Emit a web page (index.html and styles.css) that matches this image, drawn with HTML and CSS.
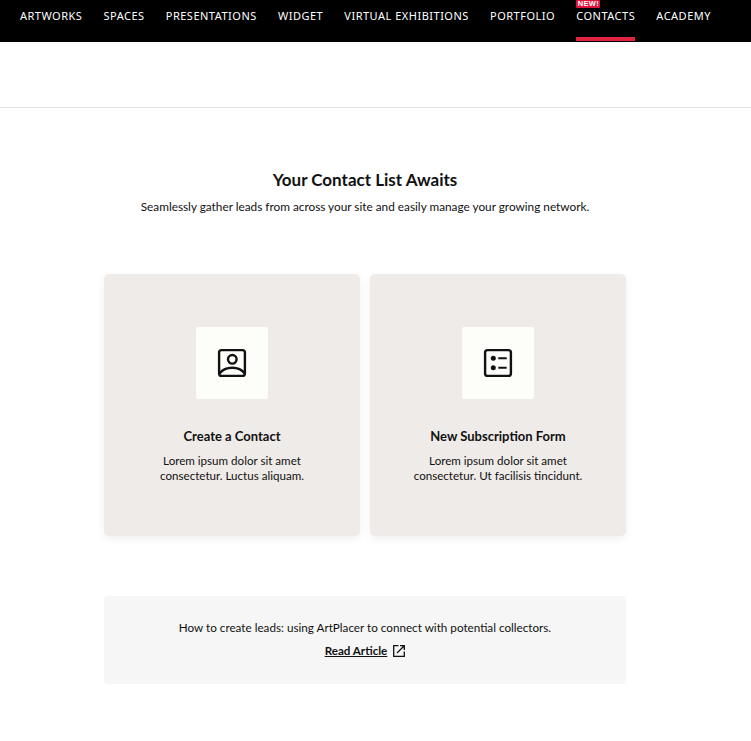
FILE: index.html
```html
<!DOCTYPE html>
<html lang="en">
<head>
  <meta charset="UTF-8">
  <meta name="viewport" content="width=device-width, initial-scale=1.0">
  <title>Contacts</title>
  <link rel="stylesheet" href="styles.css">
</head>
<body>
  <nav class="topnav">
    <a class="nav-item">ARTWORKS</a>
    <a class="nav-item">SPACES</a>
    <a class="nav-item">PRESENTATIONS</a>
    <a class="nav-item">WIDGET</a>
    <a class="nav-item">VIRTUAL EXHIBITIONS</a>
    <a class="nav-item">PORTFOLIO</a>
    <a class="nav-item active">CONTACTS<span class="new-badge">NEW!</span></a>
    <a class="nav-item">ACADEMY</a>
  </nav>
  <div class="subbar"></div>

  <main class="content">
    <h1>Your Contact List Awaits</h1>
    <p class="lead">Seamlessly gather leads from across your site and easily manage your growing network.</p>

    <div class="cards">
      <div class="card">
        <div class="card-icon">
          <svg width="32" height="32" viewBox="0 0 32 32" fill="none" stroke="#111" stroke-width="2.4">
            <rect x="3.1" y="3.1" width="25.8" height="25.8" rx="2.5"/>
            <circle cx="16.300" cy="12.300" r="4.300"/>
            <path d="M3.500 26.500c3-4 7.500-5.800 12.800-5.800s9.500 1.800 12.500 5.800"/>
          </svg>
        </div>
        <h2>Create a Contact</h2>
        <p>Lorem ipsum dolor sit amet<br>consectetur. Luctus aliquam.</p>
      </div>
      <div class="card">
        <div class="card-icon">
          <svg width="32" height="32" viewBox="0 0 32 32" fill="none" stroke="#111" stroke-width="2.4">
            <rect x="3.1" y="3.1" width="25.8" height="25.8" rx="2.500"/>
            <circle class="dot" cx="11.300" cy="11.300" r="2.500"/>
            <circle class="dot" cx="11.300" cy="20.700" r="2.500"/>
            <path d="M16.300 11.300h8.400M16.300 20.700h8.400" stroke-width="2"/>
          </svg>
        </div>
        <h2>New Subscription Form</h2>
        <p>Lorem ipsum dolor sit amet<br>consectetur. Ut facilisis tincidunt.</p>
      </div>
    </div>

    <div class="article-box">
      <p>How to create leads: using ArtPlacer to connect with potential collectors.</p>
      <a class="article-link"><span>Read Article</span>
        <svg width="12" height="12" viewBox="0 0 12 12" fill="none" stroke="#111" stroke-width="1.300">
          <path d="M5.500.7H.7v10.600h10.600V6.500"/>
          <path d="M4 8L11 1M7 .7h4.300V5"/>
        </svg>
      </a>
    </div>
  </main>
</body>
</html>
```

FILE: styles.css
```css
body {
  font-family: Lato, "Noto Sans", Arial, sans-serif;
  margin: 0;
  padding: 0;
  background-color: white;
  color: #111;
}

.topnav {
  display: flex;
  gap: 21.15px;
  height: 42px;
  padding-left: 20px;
  background: black;
}

.nav-item {
  position: relative;
  height: 37px;
  font-family: "Noto Sans", Arial, sans-serif;
  line-height: 32px;
  font-size: 11px;
  letter-spacing: 0.5px;
  color: white;
  white-space: nowrap;
}

.nav-item.active {
  border-bottom: 4px solid #e0243f;
}

.new-badge {
  position: absolute;
  top: 0;
  left: 0;
  height: 8px;
  padding: 0 1.5px;
  background: #e0143c;
  border-radius: 1px;
  font-family: "Liberation Sans", Arial, sans-serif;
  font-size: 7.5px;
  font-weight: bold;
  line-height: 8px;
  letter-spacing: 0.3px;
}

.subbar {
  height: 65px;
  border-bottom: 1px solid #e4e4e4;
}

.content {
  width: 522px;
  margin-left: 104px;
}

h1 {
  margin: 61px 0 0;
  font-size: 17px;
  line-height: 22px;
  font-weight: 700;
  text-align: center;
}

.lead {
  margin: 8px 0 0;
  font-size: 11.8px;
  line-height: 16px;
  text-align: center;
  white-space: nowrap;
}

.cards {
  display: flex;
  gap: 10px;
  margin-top: 59px;
}

.card {
  width: 256px;
  height: 262px;
  padding-top: 53px;
  box-sizing: border-box;
  background: #efebe8;
  border-radius: 5px;
  box-shadow: 0 3px 8px rgba(0, 0, 0, 0.06);
  text-align: center;
}

.card-icon {
  display: flex;
  align-items: center;
  justify-content: center;
  width: 72px;
  height: 72px;
  margin: 0 auto;
  background: #fdfdfa;
  border-radius: 2px;
}

.card h2 {
  margin: 28px 0 0;
  font-size: 13px;
  line-height: 18px;
  font-weight: 700;
}

.card p {
  margin: 8px 0 0;
  font-size: 11.6px;
  line-height: 15px;
}

.dot {
  fill: #111;
  stroke: none;
}

.article-box {
  height: 88px;
  margin-top: 60px;
  padding-top: 23px;
  box-sizing: border-box;
  background: #f6f6f6;
  border-radius: 4px;
  text-align: center;
}

.article-box p {
  margin: 0;
  font-size: 11.7px;
  line-height: 16px;
}

.article-link {
  display: inline-flex;
  align-items: center;
  gap: 6px;
  margin-top: 8px;
  font-size: 11.6px;
  font-weight: 700;
  line-height: 16px;
}

.article-link span {
  text-decoration: underline;
}
```
